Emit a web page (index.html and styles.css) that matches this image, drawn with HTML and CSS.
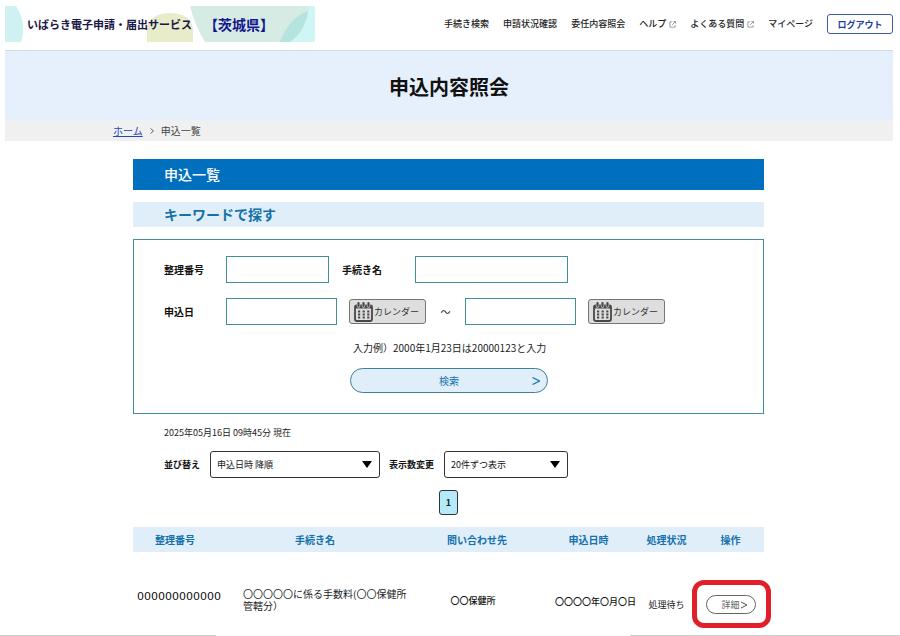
FILE: index.html
```html
<!DOCTYPE html>
<html lang="ja">
<head>
<meta charset="utf-8">
<title>申込内容照会</title>
<link rel="stylesheet" href="styles.css">
</head>
<body>
<svg class="sprite" aria-hidden="true">
  <symbol id="external" viewBox="0 0 8 8"><path d="M3.5 1H1v6h6V4.500M5 .5h2.500V3M7.300 .7L3.500 4.500" fill="none" stroke="#777" stroke-width=".8"/></symbol>
  <symbol id="calendar" viewBox="0 0 19 20">
    <path d="M2.500 3.500H16.500Q18 3.500 18 5V17Q18 19 16 19H3Q1 19 1 17V5Q1 3.500 2.500 3.500Z" fill="none" stroke="#484848" stroke-width="1.800"/>
    <path d="M1 3.500H18V6.500H1Z" fill="#484848"/>
    <path d="M4.500 1.500V4M9.500 1.500V4M14.500 1.500V4" stroke="#dedede" stroke-width="3.400" stroke-linecap="round"/>
    <path d="M4.500 1.200V4M9.500 1.200V4M14.500 1.200V4" stroke="#484848" stroke-width="2.200" stroke-linecap="round"/>
    <path d="M4 9.600H15.400M4 12.600H15.400M4 15.600H15.400" stroke="#484848" stroke-width="2" stroke-dasharray="2.200 2.400" fill="none"/>
  </symbol>
</svg>
<header class="header">
  <a class="brand" href="#">
    <svg class="brand-art" viewBox="0 0 310 36" preserveAspectRatio="none" aria-hidden="true">
      <path d="M0 0H11Q22 18 16 36H0Z" fill="#cff1f2"/>
      <path d="M142 36V23C143 12 153 7 165 7s22 5 23 16v13z" fill="#e8ecc9"/>
      <path d="M185 0H310V36H200Q190 20 185 0Z" fill="#d5ebe4"/>
      <path d="M304 0H310V36H285Q301 24 304 0Z" fill="#cff5f5"/>
      <path d="M275 36Q284 12 303 5Q300 26 285 36Z" fill="#b4e3e0"/>
    </svg>
    <span class="brand-name">いばらき電子申請・届出サービス</span>
    <span class="brand-pref">【茨城県】</span>
  </a>
  <nav class="nav">
    <a href="#">手続き検索</a>
    <a href="#">申請状況確認</a>
    <a href="#">委任内容照会</a>
    <a href="#">ヘルプ<svg class="ext" aria-hidden="true"><use href="#external"/></svg></a>
    <a href="#">よくある質問<svg class="ext" aria-hidden="true"><use href="#external"/></svg></a>
    <a href="#">マイページ</a>
    <button class="logout" type="button">ログアウト</button>
  </nav>
</header>
<h1 class="title">申込内容照会</h1>
<nav class="crumbs">
  <a href="#">ホーム</a>
  <svg class="crumb-sep" viewBox="0 0 4 6" aria-hidden="true"><path d="M.5 .5L3.500 3L.5 5.500" fill="none" stroke="#666"/></svg>
  <span>申込一覧</span>
</nav>
<main class="main">
  <h2 class="bar">申込一覧</h2>
  <h3 class="subbar">キーワードで探す</h3>
  <form class="search">
    <div class="row">
      <label class="label" for="number">整理番号</label>
      <input class="field field-s" id="number" type="text">
      <label class="label label-second" for="name">手続き名</label>
      <input class="field field-l" id="name" type="text">
    </div>
    <div class="row">
      <label class="label" for="from">申込日</label>
      <input class="field field-m" id="from" type="text">
      <button class="cal" type="button"><svg aria-hidden="true"><use href="#calendar"/></svg>カレンダー</button>
      <span class="tilde">～</span>
      <input class="field field-m" id="to" type="text" aria-label="申込日（終了）">
      <button class="cal" type="button"><svg aria-hidden="true"><use href="#calendar"/></svg>カレンダー</button>
    </div>
    <p class="hint">入力例）2000年1月23日は20000123と入力</p>
    <button class="submit" type="button">検索<svg viewBox="0 0 8 8" aria-hidden="true"><path d="M.5 .5L7.500 4L.5 7.500" fill="none" stroke="#1471ad" stroke-width="1.200"/></svg></button>
  </form>
  <p class="asof">2025年05月16日 09時45分 現在</p>
  <div class="sort">
    <label for="order">並び替え</label>
    <span class="select select-l"><select id="order"><option>申込日時 降順</option></select></span>
    <label for="count">表示数変更</label>
    <span class="select select-s"><select id="count"><option>20件ずつ表示</option></select></span>
  </div>
  <div class="pager"><a href="#">1</a></div>
  <table class="list">
    <colgroup><col class="c-id"><col class="c-name"><col class="c-org"><col class="c-date"><col class="c-state"><col class="c-op"></colgroup>
    <thead>
      <tr><th>整理番号</th><th>手続き名</th><th>問い合わせ先</th><th>申込日時</th><th>処理状況</th><th>操作</th></tr>
    </thead>
    <tbody>
      <tr>
        <td class="id upper">000000000000</td>
        <td class="name upper">〇〇〇〇〇に係る手数料(〇〇保健所管轄分）</td>
        <td class="org">〇〇保健所</td>
        <td class="date">〇〇〇〇年〇月〇日</td>
        <td class="state lower">処理待ち</td>
        <td class="op lower"><span class="marked"><button class="detail" type="button">詳細<svg viewBox="0 0 8 8" aria-hidden="true"><path d="M1 1L7 4L1 7" fill="none" stroke="#555"/></svg></button></span></td>
      </tr>
    </tbody>
  </table>
</main>
<div class="rules"><span class="rule"></span><span class="rule"></span></div>
</body>
</html>
```
FILE: styles.css
```css
* { box-sizing: border-box; }
body {
  margin: 0;
  background: #fff;
  color: #222;
  font-family: "Noto Sans CJK JP", sans-serif;
  font-size: 10px;
  line-height: 16px;
}
h1, h2, h3, p { margin: 0; }
a { color: inherit; text-decoration: none; }
button, input, select { margin: 0; font-family: inherit; color: inherit; }
.sprite { display: none; }

.header {
  display: flex;
  justify-content: space-between;
  align-items: center;
  margin: 0 7px 0 5px;
  padding: 6px 0 8px;
  border-bottom: 1px solid #d5dbe2;
}
.brand {
  position: relative;
  display: flex;
  align-items: center;
  gap: 12px;
  width: 310px;
  height: 36px;
  padding-left: 22px;
  font-weight: bold;
}
.brand-art { position: absolute; inset: 0; width: 100%; height: 100%; }
.brand-name { position: relative; font-size: 11px; color: #1a1746; white-space: nowrap; }
.brand-pref { position: relative; font-size: 14px; color: #14148c; white-space: nowrap; }
.nav {
  display: flex;
  align-items: center;
  gap: 14px;
  font-size: 9px;
  font-weight: 500;
  color: #222;
  white-space: nowrap;
}
.nav a { display: flex; align-items: center; gap: 3px; }
.ext { width: 7px; height: 7px; }
.logout {
  width: 66px;
  height: 20px;
  padding: 0;
  border: 1px solid #3c5cab;
  border-radius: 3px;
  background: #fff;
  color: #1c3fa0;
  font-size: 9px;
  font-weight: bold;
}

.title {
  margin: 0 7px 0 5px;
  padding: 21px 0 18px;
  background: #e6f0fd;
  color: #111;
  font-size: 20px;
  line-height: 30px;
  text-align: center;
}
.crumbs {
  display: flex;
  align-items: center;
  gap: 7px;
  margin: 0 7px 0 5px;
  padding: 3px 108px 2px;
  background: #f0f0f0;
  color: #444;
}
.crumbs a { color: #2148b8; text-decoration: underline; }
.crumb-sep { width: 4px; height: 6px; }

.main { margin: 18px 136px 0 133px; }
.bar {
  padding: 3px 31px 4px;
  background: #0070be;
  color: #fff;
  font-size: 14px;
  line-height: 24px;
  font-weight: 500;
}
.subbar {
  margin: 12px 0;
  padding: 0 31px 1px;
  background: #e0eef9;
  color: #1471a8;
  font-size: 14px;
  line-height: 24px;
}

.search { padding: 16px 30px 20px; border: 1px solid #3f8f9c; }
.row { display: flex; align-items: center; margin-bottom: 15px; }
.label { width: 62px; color: #111; font-weight: bold; }
.label-second { width: 73px; margin-left: 13px; }
.field { height: 27px; padding: 0 4px; border: 1px solid #3f8f9c; background: #fff; font-size: 10px; }
.field-s { width: 103px; }
.field-m { width: 111px; }
.field-l { width: 153px; }
.cal {
  display: flex;
  align-items: center;
  gap: 1px;
  width: 77px;
  height: 25px;
  margin-left: 12px;
  padding: 0 4px;
  border: 1px solid #757575;
  border-radius: 3px;
  background: #dedede;
  color: #333;
  font-size: 9px;
  white-space: nowrap;
}
.cal svg { flex: none; width: 19px; height: 20px; }
.tilde { width: 39px; text-align: center; }
.hint { margin-bottom: 12px; padding-left: 189px; }
.submit {
  position: relative;
  display: block;
  width: 198px;
  height: 25px;
  margin-left: 186px;
  padding: 0;
  border: 1px solid #3f8295;
  border-radius: 13px;
  background: #e0eefa;
  color: #1471ad;
  font-size: 10px;
}
.submit svg { position: absolute; right: 7px; top: 8px; width: 8px; height: 8px; }

.asof { margin: 11px 31px 10px; font-size: 9px; }
.sort { display: flex; align-items: center; padding-left: 31px; color: #111; font-size: 9px; font-weight: bold; white-space: nowrap; }
.select { position: relative; margin: 0 9px 0 10px; }
.select::after {
  content: "";
  position: absolute;
  right: 8px;
  top: 10px;
  width: 10px;
  height: 7px;
  background: #000;
  clip-path: polygon(0 0, 100% 0, 50% 100%);
  pointer-events: none;
}
.select select {
  appearance: none;
  width: 100%;
  height: 27px;
  padding: 0 6px;
  border: 1px solid #333;
  border-radius: 3px;
  background: #fff;
  font-size: 9px;
}
.select-l { width: 170px; }
.select-s { width: 124px; }
.pager { display: flex; justify-content: center; margin: 12px 0; }
.pager a {
  width: 19px;
  border: 1px solid #333;
  border-radius: 3px;
  background: #b5eafa;
  font-size: 9px;
  line-height: 23px;
  font-weight: bold;
  text-align: center;
}

.list { width: 100%; table-layout: fixed; border-collapse: collapse; }
.c-id { width: 84px; }
.c-name { width: 196px; }
.c-org { width: 128px; }
.c-date { width: 95px; }
.c-state { width: 61px; }
.c-op { width: 67px; }
.list th { height: 25px; padding: 0; background: #e0eef9; color: #1471ad; font-size: 10px; white-space: nowrap; }
.list td { height: 83px; padding: 16px 0 0; text-align: center; line-height: 12px; white-space: nowrap; }
.list .upper { padding: 6px 0 0; }
.list .lower { padding: 22px 0 0; }
.list .id { padding-left: 4px; color: #111; font-family: "DejaVu Sans", sans-serif; font-size: 11px; }
.list .name { padding: 12px 0 0 26px; text-align: left; white-space: normal; }
.list .org { padding: 14px 8px 0 0; font-size: 9px; font-weight: 500; color: #111; }
.list .date { text-align: right; font-size: 9px; font-weight: 500; color: #111; }
.list .state { font-size: 9px; }
.marked { position: relative; display: inline-block; vertical-align: middle; }
.marked::after {
  content: "";
  position: absolute;
  inset: -15px -15px -14px -14px;
  border: 5px solid #e11f2b;
  border-radius: 12px;
  pointer-events: none;
}
.detail {
  display: flex;
  align-items: center;
  justify-content: flex-end;
  width: 50px;
  height: 19px;
  padding: 0 7px 0 0;
  border: 1px solid #666;
  border-radius: 10px;
  background: #fff;
  color: #666;
  font-size: 9px;
}
.detail svg { width: 8px; height: 8px; }
.rules { display: flex; justify-content: space-between; }
.rule { width: 24%; height: 1px; background: #ccc; }
.rule + .rule { width: 30%; }
```
